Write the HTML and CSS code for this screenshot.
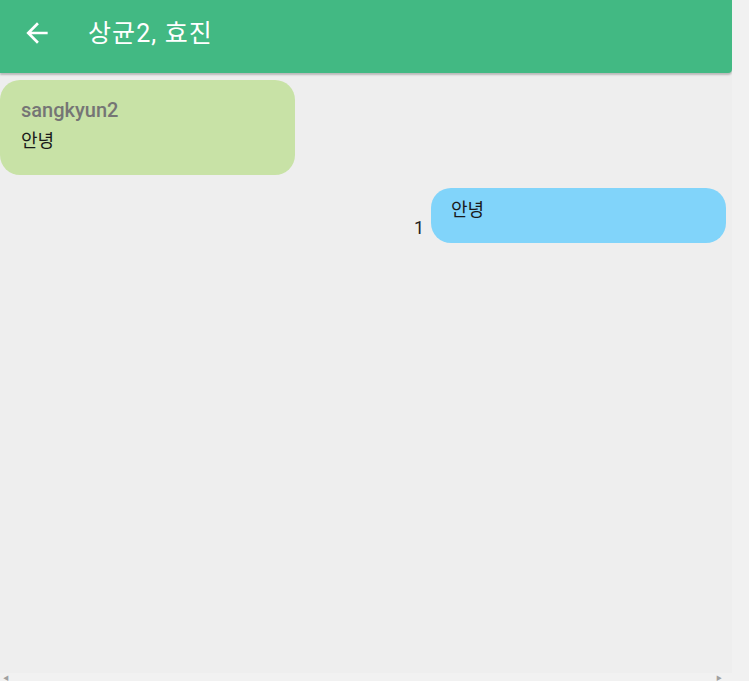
FILE: index.html
```html
<!DOCTYPE html>
<html lang="ko">
<head>
<meta charset="utf-8">
<title>상균2, 효진</title>
<link rel="stylesheet" href="styles.css">
</head>
<body>
<div class="frame">
  <header class="appbar">
    <button class="back" aria-label="뒤로">
      <svg width="32" height="32" viewBox="0 0 24 24"><path d="M20 11H7.83l5.59-5.59L12 4l-8 8 8 8 1.41-1.41L7.83 13H20v-2z" fill="#fff"/></svg>
    </button>
    <h1 class="title">상균2, 효진</h1>
  </header>
  <main class="messages">
    <div class="row left">
      <div class="bubble received">
        <div class="sender">sangkyun2</div>
        <div class="text">안녕</div>
      </div>
    </div>
    <div class="row right">
      <span class="unread">1</span>
      <div class="bubble sent">
        <div class="text">안녕</div>
      </div>
    </div>
  </main>
</div>
<div class="hscroll">
  <span class="arrow">&#9664;</span>
  <span class="arrow">&#9654;</span>
</div>
</body>
</html>
```

FILE: styles.css
```css
html, body {
  margin: 0;
  padding: 0;
}
body {
  background: #f1f1f1;
  width: 749px;
  height: 681px;
  overflow: hidden;
  font-family: Roboto, "Noto Sans CJK KR", sans-serif;
}
.frame {
  width: 732px;
  height: 673px;
  background: #eeeeee;
  display: flex;
  flex-direction: column;
  overflow: hidden;
}
.appbar {
  height: 73px;
  box-sizing: border-box;
  flex: none;
  background: #42b983;
  border-bottom-right-radius: 4px;
  box-shadow: 0 2px 2px rgba(0, 0, 0, 0.22);
  display: flex;
  align-items: center;
  padding: 0 0 7px 21px;
  position: relative;
  z-index: 1;
}
.back {
  border: 0;
  background: none;
  padding: 0;
  width: 32px;
  height: 32px;
  display: flex;
}
.title {
  margin: 0 0 0 35px;
  color: #ffffff;
  font-family: Roboto, "Noto Sans CJK KR", sans-serif;
  font-weight: 400;
  font-size: 25px;
  letter-spacing: 1.1px;
  line-height: 1;
}
.messages {
  display: flex;
  flex-direction: column;
  padding-top: 7px;
}
.row {
  display: flex;
  align-items: flex-end;
}
.row.right {
  justify-content: flex-end;
  padding-right: 6px;
  margin-top: 13px;
  gap: 7px;
}
.bubble {
  width: 295px;
  box-sizing: border-box;
  border-radius: 20px;
}
.received {
  background: #c8e2a6;
  height: 95px;
  padding: 18px 21px 0;
}
.sent {
  background: #81d4fa;
  height: 55px;
  padding: 9px 20px 0;
}
.sender {
  color: #757575;
  font-weight: 500;
  font-size: 20px;
  line-height: 24px;
}
.text {
  color: #1a1a1a;
  font-size: 18px;
  line-height: 26px;
  margin-top: 6px;
}
.sent .text {
  margin-top: 0;
}
.unread {
  color: #222;
  font-size: 18px;
  line-height: 22px;
  margin-bottom: 4px;
}
.hscroll {
  height: 8px;
  width: 732px;
  display: flex;
  justify-content: space-between;
  align-items: flex-end;
  padding: 0 10px 0 3px;
  box-sizing: border-box;
}
.arrow {
  font-size: 6px;
  line-height: 6px;
  color: #a0a0a0;
}
```
